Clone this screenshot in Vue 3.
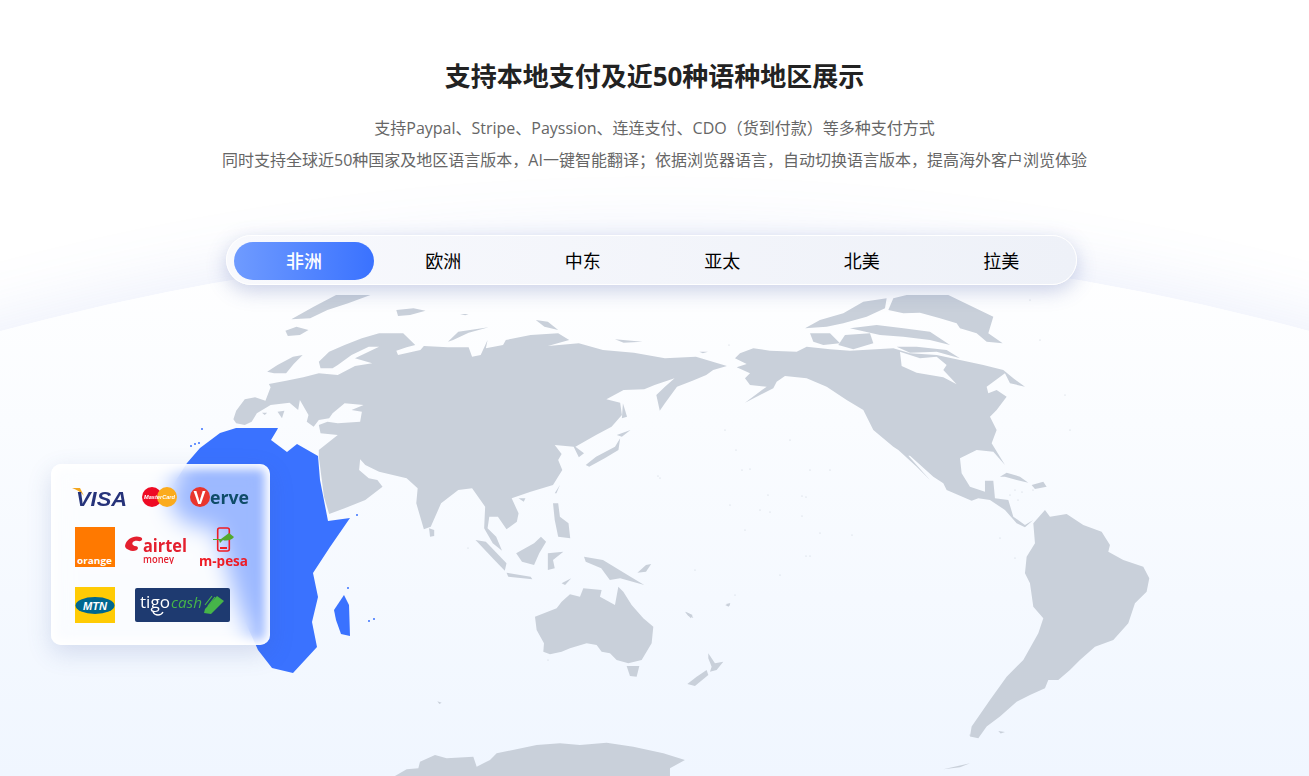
<script setup>
const tabs = ['非洲', '欧洲', '中东', '亚太', '北美', '拉美']

const toPath = (pts) => 'M' + pts.join(' L') + 'Z'

const eurasia = [
  // mainland
  toPath(['97,388','105,362','130,328','160,322','190,332','205,292','200,282','250,272','300,262','345,250','400,255','450,228','500,220','450,205','520,170','490,170','440,195','400,225','385,235','350,235','345,215','375,185','420,165','470,145','520,130','590,130','625,165','600,172','570,182','575,195','640,180','650,168','720,172','780,172','790,200','815,195','835,150','830,175','880,165','888,150','960,135','1040,130','1072,150','1010,168','1100,160','1170,180','1260,188','1350,205','1440,200','1530,228','1490,240','1470,255','1430,272','1385,290','1350,340','1335,362','1325,315','1350,290','1378,265','1320,285','1290,298','1230,300','1180,328','1220,338','1225,375','1195,410','1150,435','1090,470','1115,490','1100,502','1085,470','1030,465','1050,492','1040,510','1052,540','1025,585','960,605','905,625','925,670','920,695','890,718','865,680','840,680','835,715','860,740','877,782','850,760','825,715','828,650','790,595','750,600','700,640','670,710','650,718','628,640','632,595','600,565','520,545','480,525','465,508','462,540','490,565','515,570','530,590','480,630','420,655','375,672','360,620','345,500','345,480','400,435','350,430','345,405','370,395','400,400','465,395','470,365','440,360','475,345','420,340','385,370','375,385','345,390','330,410','310,395','315,375','290,330','285,360','260,338','205,345','165,370','150,395','130,405','105,400']),
  // Greenland tip, Iceland, British Isles
  toPath(['265,88','330,50','395,15','495,15','430,40','370,60','320,85']),
  toPath(['248,122','280,110','315,120','290,135','255,138']),
  toPath(['195,245','225,225','270,200','298,195','272,222','250,250','215,250']),
  // Arctic islands
  toPath(['570,60','620,55','655,62','610,75','575,78']),
  toPath(['720,155','750,125','838,112','780,128','735,150']),
  toPath(['975,90','1010,95','1040,120','1000,110']),
  toPath(['1205,148','1285,155','1230,158']),
  toPath(['1450,185','1475,185','1460,190']),
  toPath(['755,72','780,72','770,76']),
  // Mediterranean
  toPath(['225,365','245,362','238,385']),
  toPath(['180,368','195,368','188,375']),
  // Japan, Sakhalin, Hokkaido
  toPath(['1120,525','1150,500','1205,470','1220,445','1215,480','1175,505','1130,530']),
  toPath(['1228,340','1240,380','1225,385']),
  toPath(['1210,435','1250,420','1225,440']),
  // South-east Asia
  toPath(['1030,610','1045,585','1035,610']),
  toPath(['1025,640','1040,640','1045,680','1070,700','1075,745','1040,740','1030,690']),
  toPath(['918,790','970,760','990,740','1005,755','985,790','970,825','935,815']),
  toPath(['800,750','830,755','890,820','885,842','850,805']),
  toPath(['890,848','960,860','965,868','895,860']),
  toPath(['1010,790','1055,785','1025,810','1030,835','1010,840']),
  toPath(['1115,800','1170,810','1250,860','1290,885','1220,865','1190,870','1165,835','1120,815']),
  toPath(['665,715','680,720','680,738','668,740']),
  toPath(['925,625','945,625','940,635']),
  toPath(['1050,880','1078,865','1060,885']),
  toPath(['1410,965','1430,975','1425,985']),
  toPath(['1525,945','1540,940','1535,950']),
  toPath(['1295,825','1310,822','1295,845','1270,848']),
]

const americas = [
  toPath(['15,205','30,190','70,175','120,182','200,185','230,170','300,178','360,182','490,175','540,190','620,195','690,210','760,225','820,240','850,265','885,290','840,280','825,250','770,290','775,310','800,300','830,320','800,360','780,380','800,420','785,460','825,525','790,485','740,480','690,505','695,550','720,590','765,605','765,572','790,572','795,625','835,630','850,680','885,705','910,690','885,712','860,700','825,660','780,630','745,625','725,632','650,600','640,580','610,560','540,497','535,497','600,570','560,530','505,480','490,470','430,420','400,360','350,330','290,290','230,265','165,258','140,275','130,295','90,315','45,338','110,290','60,285','45,265','60,250','20,232','50,222'])
    + toPath(['510,185','570,205','620,200','650,225','640,240','680,283','640,262','560,248','515,228']),
  toPath(['475,60','490,25','530,15','655,15','790,80','775,130','818,160','770,155','740,130','690,115','680,100','630,85','570,68','520,70']),
  toPath(['225,115','270,90','340,70','400,35','470,25','465,55','410,80','340,100','290,110']),
  toPath(['240,130','300,130','330,160','280,165','250,155']),
  toPath(['360,115','440,105','520,115','600,125','660,165','600,150','520,140','450,135']),
  toPath(['345,135','420,130','430,160','370,178','325,165']),
  toPath(['500,170','560,170','650,180','690,205','620,185','540,188']),
  toPath(['810,560','830,548','870,560','895,578','860,570','825,560']),
  toPath(['905,585','940,575','950,590','915,597']),
  toPath(['910,700','945,660','960,680','1010,672','1060,705','1115,725','1140,765','1135,785','1180,810','1240,830','1258,865','1250,905','1215,940','1195,1000','1150,1050','1095,1070','1050,1110','1020,1140','985,1170','955,1170','945,1195','900,1215','860,1235','810,1280','770,1310','745,1345','720,1340','725,1310','780,1230','830,1160','880,1110','925,1030','940,985','910,950','900,880','885,850','890,800','915,760']),
  toPath(['805,1323','825,1326','812,1331']),
  toPath(['640,1438','720,1420','690,1432']),
]

const oceania = [
  toPath(['465,170','530,145','545,125','570,103','600,110','610,85','665,90','660,110','705,135','715,80','730,95','755,135','790,175','820,200','815,250','785,300','745,310','710,300','690,280','665,275','650,255','620,250','570,265','545,275','510,283','490,275','492,250','470,210']),
  toPath(['740,318','778,318','770,350','750,348']),
  toPath(['985,280','1005,310','1030,305','1010,330','990,335','995,320','985,295']),
  toPath(['980,330','985,345','945,378','922,372','950,350']),
  toPath(['45,648','80,628','115,625','120,605','165,585','200,595','280,590','290,620','330,600','350,580','470,555','540,550','600,555','680,548','760,560','850,580','915,600','870,625','870,648']),
  toPath(['915,155','935,165','940,174','925,168']),
  toPath(['1038,132','1050,130','1048,138']),
  toPath(['172,424','185,428','178,432']),
]

const dots = [
  [806,556],[810,556],[746,356],[768,495],[802,496],[806,497],[658,476],[660,478],[729,345],[750,469],[736,450],[760,510],[802,516],[770,512],[745,530],[730,505],[695,570],[810,470],[742,470],[790,440],[970,735],[1018,500],[1030,300],[725,430],[780,575],
  [548,660],[468,548],[735,595],[820,533],[852,535],[1000,538],[830,470],[1070,430],[1065,395],[1015,490],[990,490],[1022,492],[1010,495],[1033,490],[1015,558],[1040,340],
]

const blueDots = [[202,429],[191,446],[195,444],[199,443],[357,515],[348,588],[374,619],[369,621]]
</script>

<template>
  <div class="page">
    <div class="globe"></div>

    <svg class="map" viewBox="0 295 1309 481" aria-hidden="true">
      <g class="land" transform="translate(200 290) scale(.3444 .3333)">
        <path v-for="(d, i) in eurasia" :key="'e' + i" :d="d" />
      </g>
      <g class="land" transform="translate(730 290) scale(.3333)">
        <path v-for="(d, i) in americas" :key="'a' + i" :d="d" />
      </g>
      <g class="land" transform="translate(380 560) scale(.3333)">
        <path v-for="(d, i) in oceania" :key="'o' + i" :d="d" />
      </g>
      <circle v-for="(p, i) in dots" :key="'d' + i" class="dot" :cx="p[0]" :cy="p[1]" r=".6" />
      <g class="africa">
        <path d="M187,463 L170,490 L172,510 L190,525 L215,528 L228,570 L240,610 L258,650 L272,668 L293,673 L317,647 L312,622 L318,597 L313,573 L330,547 L350,518 L328,521 L320,480 L318,456 L297,444 L287,452 L271,440 L277,430 L278,428 L236,428 L220,433 L200,448Z" />
        <path d="M334,610 L344,595 L349,605 L350,636 L341,634 L336,620Z" />
        <circle v-for="(p, i) in blueDots" :key="'b' + i" :cx="p[0]" :cy="p[1]" r="1" />
      </g>
    </svg>

    <header class="head">
      <h1 class="title">支持本地支付及近50种语种地区展示</h1>
      <p class="desc">支持Paypal、Stripe、Payssion、连连支付、CDO（货到付款）等多种支付方式</p>
      <p class="desc">同时支持全球近50种国家及地区语言版本，AI一键智能翻译；依据浏览器语言，自动切换语言版本，提高海外客户浏览体验</p>
    </header>

    <nav class="tabs">
      <div v-for="(t, i) in tabs" :key="t" class="tab" :class="{ active: i === 0 }">{{ t }}</div>
    </nav>

    <aside class="card">
      <div class="row row1">
        <svg class="logo" width="55" height="20" viewBox="0 0 55 20">
          <path d="M0,1 L8,1 L12,9 C9,5 5,3 0,1Z" fill="#f2a61f" />
          <text x="4" y="19" class="visa" textLength="51" lengthAdjust="spacingAndGlyphs">VISA</text>
        </svg>
        <svg class="logo mc" width="35" height="20" viewBox="0 0 35 20">
          <circle cx="10" cy="10" r="10" fill="#ee0a24" />
          <circle cx="25" cy="10" r="10" fill="#fbab1d" />
          <text x="17.5" y="12" class="mc-text" text-anchor="middle" textLength="31" lengthAdjust="spacingAndGlyphs">MasterCard</text>
        </svg>
        <svg class="logo verve" width="59" height="20" viewBox="0 0 59 20">
          <circle cx="10" cy="10" r="10" fill="#e9352d" />
          <text x="3.5" y="17" class="verve-v">V</text>
          <text x="20" y="17" class="verve-t" textLength="39" lengthAdjust="spacingAndGlyphs">erve</text>
        </svg>
      </div>

      <div class="row row2">
        <svg class="logo" width="40" height="40" viewBox="0 0 40 40">
          <rect width="40" height="40" fill="#ff7900" />
          <text x="2" y="36.5" class="orange" textLength="35" lengthAdjust="spacingAndGlyphs">orange</text>
        </svg>
        <svg class="logo airtel" width="64" height="29" viewBox="0 0 64 29">
          <path d="M1,11 C2,4 10,0 16,2 C20,3 18,7 14,6 C10,5 7,8 9,10 C11,12 13,10 14,13 C14,16 8,17 5,15 C3,14 1,13 1,11Z" fill="#e4202f" />
          <text x="19" y="17" class="airtel-t" textLength="44" lengthAdjust="spacingAndGlyphs">airtel</text>
          <text x="19" y="28" class="airtel-m" textLength="31" lengthAdjust="spacingAndGlyphs">money</text>
        </svg>
        <svg class="logo mpesa" width="49" height="41" viewBox="0 0 49 41">
          <rect x="18.7" y="1" width="11.6" height="23" rx="2" fill="none" stroke="#ee1c25" stroke-width="1.6" />
          <rect x="21" y="20" width="7" height="2" fill="#ee1c25" />
          <path d="M14,12 L22,12 L30,6 L35,10 C32,14 26,14 24,13 L21,16 L20,13 L14,13Z" fill="#53a82e" />
          <text x="0" y="39" class="mpesa-t" textLength="49" lengthAdjust="spacingAndGlyphs">m-pesa</text>
        </svg>
      </div>

      <div class="row row3">
        <svg class="logo" width="40" height="36" viewBox="0 0 40 36">
          <rect width="40" height="36" fill="#ffcb05" />
          <ellipse cx="20" cy="18.5" rx="19.5" ry="8.5" fill="#00678f" />
          <text x="20" y="23" class="mtn" text-anchor="middle" textLength="24" lengthAdjust="spacingAndGlyphs">MTN</text>
        </svg>
        <svg class="logo tigo" width="95" height="34" viewBox="0 0 95 34">
          <rect width="95" height="34" rx="2" fill="#1e3a70" />
          <text x="5" y="20" class="tigo-t" textLength="30" lengthAdjust="spacingAndGlyphs">tigo</text>
          <path d="M18,24 C20,28 26,28 28,24" fill="none" stroke="#fff" stroke-width="1.3" />
          <text x="36" y="20" class="cash-t" textLength="31" lengthAdjust="spacingAndGlyphs">cash</text>
          <path d="M70,21 L82,8 L89,13 L76,26 L69,25Z" fill="#46b549" />
          <path d="M70,17 L77,8 M73,18 L80,9" stroke="#46b549" stroke-width="1.2" />
        </svg>
      </div>
    </aside>
  </div>
</template>

<style scoped>
.page {
  position: relative;
  height: 776px;
  overflow: hidden;
  background: #fff;
  font-family: "Open Sans", "Noto Sans CJK SC", sans-serif;
}
.globe {
  position: absolute;
  left: 50%;
  top: 244px;
  width: 5000px;
  height: 5000px;
  margin-left: -2500px;
  border-radius: 50%;
  background: linear-gradient(#ffffff 0, #f0f6ff 532px);
  box-shadow: 0 -4px 70px rgba(90, 125, 225, 0.13);
}
.map {
  position: absolute;
  left: 0;
  top: 295px;
  width: 1309px;
  height: 481px;
  display: block;
}
.land path {
  fill: #c9d0da;
  fill-rule: evenodd;
}
.dot {
  fill: #c9d0da;
}
.africa path,
.africa circle {
  fill: #3a72ff;
}
.head {
  position: relative;
  padding-top: 58px;
  text-align: center;
}
.title {
  margin: 0 0 18px;
  font-size: 26px;
  line-height: 36px;
  font-weight: 700;
  color: #222;
}
.desc {
  margin: 0;
  font-size: 16px;
  line-height: 32px;
  color: #666;
}
.tabs {
  position: relative;
  box-sizing: border-box;
  width: 851px;
  height: 50px;
  margin: 59px 0 0 226px;
  padding: 6px 7px 0;
  display: grid;
  grid-template-columns: repeat(6, 139.5px);
  border: 1px solid #fff;
  border-radius: 25px;
  background: linear-gradient(90deg, #f8f9fd, #eef1f8);
  box-shadow: 0 6px 20px rgba(70, 90, 170, 0.28);
}
.tab {
  height: 38px;
  line-height: 38px;
  text-align: center;
  font-size: 18px;
  color: #000;
  border-radius: 19px;
}
.tab.active {
  width: 140px;
  color: #fff;
  font-weight: 500;
  background: linear-gradient(90deg, #6f9bff, #3a72ff);
}
.card {
  position: absolute;
  left: 51px;
  top: 464px;
  box-sizing: border-box;
  width: 219px;
  height: 181px;
  padding-top: 23px;
  border-radius: 10px;
  background: rgba(255, 255, 255, 0.5);
  -webkit-backdrop-filter: blur(11px);
  backdrop-filter: blur(11px);
  box-shadow: inset 0 0 10px 5px #fff, 0 8px 24px rgba(60, 90, 160, 0.18);
}
.row {
  display: flex;
  align-items: flex-start;
}
.logo {
  display: block;
  flex: none;
}
.row1 {
  height: 20px;
  padding-left: 21px;
}
.row2 {
  height: 41px;
  margin-top: 20px;
  padding-left: 24px;
}
.row3 {
  height: 36px;
  margin-top: 19px;
  padding-left: 24px;
}
.mc {
  margin-left: 15px;
}
.verve {
  margin-left: 13px;
}
.airtel {
  margin: 8px 0 0 9px;
}
.mpesa {
  margin-left: 11px;
}
.tigo {
  margin: 1px 0 0 20px;
}
.visa {
  font: italic 700 20px "Liberation Sans", sans-serif;
  fill: #26337a;
}
.mc-text {
  font: italic 700 6px "Liberation Sans", sans-serif;
  fill: #fff;
}
.verve-v {
  font: 700 18px "Liberation Sans", sans-serif;
  fill: #fff;
}
.verve-t {
  font: 700 18px "Open Sans", sans-serif;
  fill: #0f4c68;
}
.orange {
  font: 700 9.5px "Open Sans", sans-serif;
  fill: #fff;
}
.airtel-t {
  font: 700 18px "Open Sans", sans-serif;
  fill: #e4202f;
}
.airtel-m {
  font: 600 10px "Open Sans", sans-serif;
  fill: #e4202f;
}
.mpesa-t {
  font: 700 14px "Open Sans", sans-serif;
  fill: #ee1c25;
}
.mtn {
  font: italic 700 11px "Liberation Sans", sans-serif;
  fill: #fff;
}
.tigo-t {
  font: 400 17px "Open Sans", sans-serif;
  fill: #fff;
}
.cash-t {
  font: italic 400 15px "Open Sans", sans-serif;
  fill: #46b549;
}
</style>
